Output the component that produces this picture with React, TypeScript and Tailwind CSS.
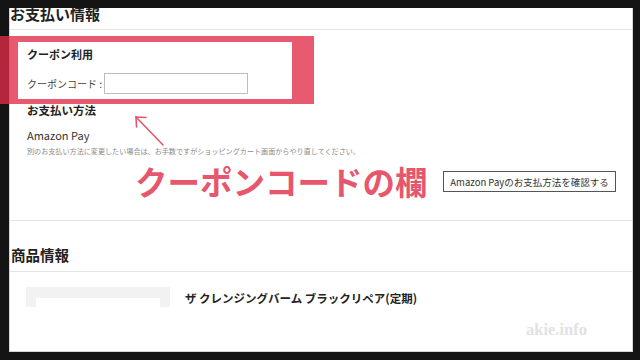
const jp = { fontFamily: '"Noto Sans CJK JP", "Noto Sans", sans-serif' };

function Arrow() {
  return (
    <svg className="absolute left-[130px] top-[112px]" width="40" height="40" viewBox="0 0 40 40">
      <g stroke="#e6566d" strokeWidth="1.6" fill="none" strokeLinecap="round">
        <line x1="33" y1="33" x2="6" y2="5" />
        <line x1="6" y1="5" x2="16" y2="5.5" />
        <line x1="6" y1="5" x2="6.5" y2="15" />
      </g>
    </svg>
  );
}

export default function App() {
  return (
    <div className="relative h-[360px] w-[640px] overflow-hidden bg-[#141414] pb-[8px] pl-[9px] pr-[7px] pt-[8px]" style={jp}>
      <div className="relative h-full overflow-hidden border-x border-b border-[#d4d4d4] bg-white">
        <div className="h-[24px] border-b border-[#e4e4e4]">
          <h2 className="-mt-[2px] text-[15px] font-bold leading-[16px] text-[#222]">お支払い情報</h2>
        </div>

        <section className="border-b border-[#e4e4e4] pb-[28px] pl-[17px] pr-[16px]">
          <h3 className="mt-[17px] text-[11px] font-bold leading-[14px] text-[#222]">クーポン利用</h3>
          <div className="mt-[12px] flex h-[21px] items-center gap-[2px]">
            <span className="text-[10px] leading-[14px] text-[#444]">クーポンコード :</span>
            <input className="h-[21px] w-[144px] border border-[#bdbdbd] bg-white outline-none" />
          </div>
          <h3 className="mt-[9px] text-[11.5px] font-bold leading-[14px] text-[#222]">お支払い方法</h3>
          <p className="mt-[11px] text-[11px] leading-[14px] text-[#333]">Amazon Pay</p>
          <p className="mt-[4px] text-[7.1px] leading-[10px] text-[#8a8a8a]">
            別のお支払い方法に変更したい場合は、お手数ですがショッピングカート画面からやり直してください。
          </p>
          <div className="mt-[15px] flex justify-end">
            <button className="h-[21px] w-[173px] border border-[#555] bg-white text-[9.5px] leading-[12px] text-[#333]">
              Amazon Payのお支払方法を確認する
            </button>
          </div>
        </section>

        <div className="border-b border-[#e4e4e4] pb-[7px] pl-[1px]">
          <h2 className="mt-[25px] text-[14.5px] font-bold leading-[18px] text-[#222]">商品情報</h2>
        </div>

        <div className="mt-[15px] flex gap-[15px] pl-[16px]">
          <div className="h-[20px] w-[144px] bg-[#f2f2f2] px-[10px] pt-[11px]">
            <div className="h-full w-full bg-white" />
          </div>
          <p className="mt-[4px] text-[11.5px] font-bold leading-[14px] text-[#222]">
            ザ クレンジングバーム ブラックリペア(定期)
          </p>
        </div>

        <div
          className="absolute left-[516px] top-[312px] text-[16.5px] font-bold leading-[20px] text-[#e2e2e2]"
          style={{ fontFamily: '"Liberation Serif", serif' }}
        >
          akie.info
        </div>
      </div>

      <div className="pointer-events-none absolute left-0 top-[36px] h-[68px] w-[314px] border-b-[5px] border-l-[18px] border-r-[22px] border-t-[6px] border-[rgba(226,44,72,0.78)]" />
      <Arrow />
      <div className="absolute left-[135px] top-[165px] text-[32.5px] font-bold leading-[32px] text-[#e6566d]">
        クーポンコードの欄
      </div>
    </div>
  );
}
